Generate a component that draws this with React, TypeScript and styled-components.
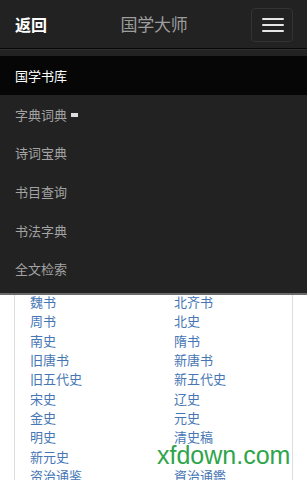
import React from "react";
import styled, { createGlobalStyle } from "styled-components";

const GlobalStyle = createGlobalStyle`
  html, body {
    margin: 0;
    padding: 0;
    background: #ffffff;
  }
  body {
    font-family: "Noto Sans CJK SC", "Noto Sans", "Liberation Sans", sans-serif;
    -webkit-font-smoothing: antialiased;
  }
  * { box-sizing: border-box; }
`;

const Page = styled.div`
  position: relative;
  width: 307px;
  min-height: 480px;
  overflow: hidden;
  background: #ffffff;
`;

const Navbar = styled.header`
  display: grid;
  grid-template-columns: 1fr auto 1fr;
  align-items: center;
  height: 49px;
  padding: 0 14px 0 15px;
  background: #222222;
  border-bottom: 1px solid #080808;
`;

const BackLink = styled.a`
  justify-self: start;
  color: #ffffff;
  font-size: 16px;
  font-weight: 700;
  line-height: 20px;
  text-decoration: none;
`;

const Brand = styled.div`
  color: #9d9d9d;
  font-size: 17px;
  line-height: 20px;
  letter-spacing: -0.2px;
`;

const Toggle = styled.button`
  justify-self: end;
  display: flex;
  flex-direction: column;
  gap: 4px;
  width: 42px;
  height: 34px;
  margin-top: 1px;
  padding: 9px 10px;
  background: transparent;
  border: 1px solid #333333;
  border-radius: 4px;
`;

const IconBar = styled.span`
  display: block;
  width: 22px;
  height: 2px;
  border-radius: 1px;
  background: #e6e6e6;
`;

const Menu = styled.nav`
  position: relative;
  z-index: 2;
  background: #222222;
  box-shadow: inset 0 1px 0 rgba(255, 255, 255, 0.06);
  padding: 7px 0 5px;
  border-bottom: 2px solid #6a6a6a;
`;

const MenuItem = styled.a<{ $active?: boolean }>`
  display: flex;
  align-items: center;
  height: 38.7px;
  padding: 0 15px;
  font-size: 13px;
  color: ${(p) => (p.$active ? "#ffffff" : "#a3a3a3")};
  background: ${(p) => (p.$active ? "#060606" : "transparent")};
  text-decoration: none;
`;

const Caret = styled.span`
  display: inline-block;
  width: 7px;
  height: 4px;
  margin-left: 4px;
  margin-top: 2px;
  background: #dddddd;
`;

const Card = styled.section`
  margin: -3px 14px 0;
  background: #ffffff;
  border-left: 1px solid #dddddd;
  border-right: 1px solid #dddddd;
`;

const BookGrid = styled.div`
  display: grid;
  grid-template-columns: 144px 1fr;
  grid-auto-rows: 19.3px;
  padding-left: 15px;
`;

const BookLink = styled.a`
  font-size: 13px;
  line-height: 19.3px;
  color: #4676b4;
  text-decoration: none;
  white-space: nowrap;
`;

const Watermark = styled.div`
  position: absolute;
  left: 157px;
  top: 443px;
  font-family: "Liberation Sans", Arial, sans-serif;
  font-size: 25px;
  line-height: 25px;
  color: #2ea54b;
  pointer-events: none;
  z-index: 3;
`;

const menu = ["国学书库", "字典词典", "诗词宝典", "书目查询", "书法字典", "全文检索"];

const books: [string, string][] = [
  ["魏书", "北齐书"],
  ["周书", "北史"],
  ["南史", "隋书"],
  ["旧唐书", "新唐书"],
  ["旧五代史", "新五代史"],
  ["宋史", "辽史"],
  ["金史", "元史"],
  ["明史", "清史稿"],
  ["新元史", ""],
  ["资治通鉴", "資治通鑑"],
];

export default function App() {
  return (
    <>
      <GlobalStyle />
      <Page>
        <Navbar>
          <BackLink href="#">返回</BackLink>
          <Brand>国学大师</Brand>
          <Toggle aria-label="menu">
            <IconBar />
            <IconBar />
            <IconBar />
          </Toggle>
        </Navbar>
        <Menu>
          {menu.map((m, i) => (
            <MenuItem key={m} href="#" $active={i === 0}>
              {m}
              {i === 1 && <Caret />}
            </MenuItem>
          ))}
        </Menu>
        <Card>
          <BookGrid>
            {books.map(([a, b]) => (
              <React.Fragment key={a}>
                <BookLink href="#">{a}</BookLink>
                <BookLink href="#">{b}</BookLink>
              </React.Fragment>
            ))}
          </BookGrid>
        </Card>
        <Watermark>xfdown.com</Watermark>
      </Page>
    </>
  );
}
